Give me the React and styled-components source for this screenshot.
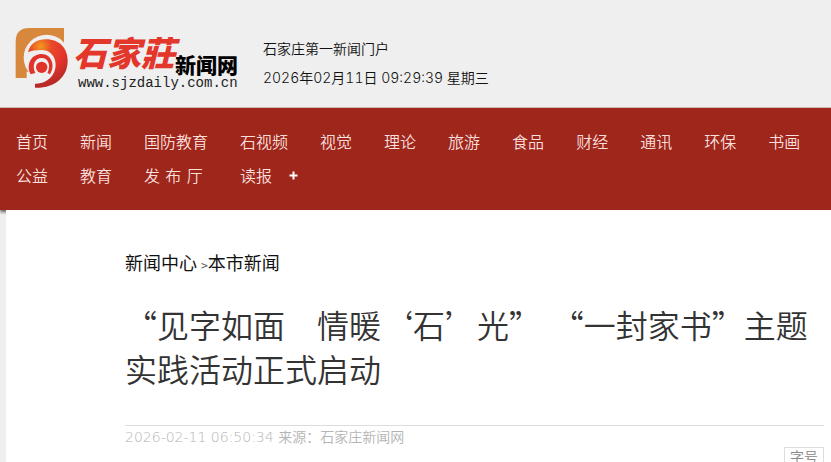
import React from 'react';
import styled, { createGlobalStyle } from 'styled-components'

const GlobalStyle = createGlobalStyle`
    * {
        box-sizing: border-box;
    }
    html {
        scrollbar-width: none;
    }
    body {
        margin: 0;
        background: #efefef;
        color: #222;
        font-family: "Noto Sans CJK SC", sans-serif;
        font-weight: 350;
    }
    a {
        color: inherit;
        text-decoration: none;
    }
`

const Header = styled.header`
    display: flex;
    align-items: center;
    gap: 24px;
    height: 108px;
    padding: 8px 15px 0;
    border-bottom: 1px solid #d6bcba;
`

const Logo = styled.a`
    display: flex;
    align-items: center;
    gap: 5px;
`

const LogoText = styled.span`
    display: flex;
    flex-direction: column;
    width: 166px;
    padding-top: 4px;
`

const LogoName = styled.span`
    display: flex;
    align-items: flex-end;
    height: 46px;
    color: #000;
    font-size: 21px;
    font-weight: 900;
    line-height: 24px;
    white-space: nowrap;
`

const Brush = styled.em`
    color: #e3372b;
    font-size: 34px;
    line-height: 48px;
`

const LogoUrl = styled.span`
    padding-left: 5px;
    color: #222;
    font-family: "Liberation Mono", monospace;
    font-size: 14px;
    font-weight: 400;
    line-height: 14px;
`

const Tagline = styled.div`
    padding-top: 11px;
    color: #111;
    font-family: Inter, "Noto Sans CJK SC", sans-serif;
    font-size: 14px;
    font-variant-numeric: tabular-nums;
    line-height: 29px;
`

const Nav = styled.nav`
    display: flex;
    flex-wrap: wrap;
    padding: 16px 0 18px;
    background: #9e261b;
    box-shadow: 0 2px 3px rgba(0, 0, 0, 0.6);
`

const NavLink = styled.a`
    padding: 0 16px;
    color: #f7dfdc;
    font-size: 16px;
    line-height: 34px;
    white-space: pre;
`

const More = styled.button`
    display: flex;
    align-items: center;
    padding: 0 1px;
    border: 0;
    background: none;
    color: #fff;
`

const Page = styled.main`
    position: relative;
    margin-left: 6px;
    padding: 38px 7px 24px 119px;
    background: #fff;
`

const Crumbs = styled.div`
    color: #111;
    font-size: 18px;
    font-weight: 400;
    line-height: 28px;
`

const Arrow = styled.span`
    color: #555;
    font-size: 12px;
`

const Title = styled.h1`
    margin: 23px 0 35px;
    color: #333;
    font-size: 32px;
    font-weight: 350;
    line-height: 44px;
`

const Meta = styled.div`
    border-top: 1px solid #ddd;
    color: #b4b4b4;
    font-family: "DejaVu Sans Light", "DejaVu Sans", "Noto Sans CJK SC", sans-serif;
    font-size: 14px;
    line-height: 20px;
    padding-top: 1px;
`

const Tools = styled.div`
    display: flex;
    justify-content: flex-end;
`

const SizeButton = styled.button`
    padding: 0 5px;
    border: 1px solid #ddd;
    background: #fff;
    color: #888;
    font-family: inherit;
    font-size: 14px;
    font-weight: 350;
    line-height: 16px;
`

const links = [
    '首页', '新闻', '国防教育', '石视频', '视觉', '理论', '旅游', '食品',
    '财经', '通讯', '环保', '书画', '公益', '教育', '发\u2004布\u2004厅\u2004', '读报',
]

const LogoMark = () => (
    <svg width="53" height="62" viewBox="45 36 159 186" aria-hidden="true">
        <defs>
            <radialGradient id="glow" gradientUnits="userSpaceOnUse" cx="122" cy="94" r="112">
                <stop offset="0" stopColor="#f39a1e" />
                <stop offset="0.3" stopColor="#e9482a" />
                <stop offset="0.7" stopColor="#e0332a" />
                <stop offset="1" stopColor="#b92a27" />
            </radialGradient>
        </defs>
        <path d="M47 189V80Q47 39 88 39H192V189Z" fill="#d8883c" />
        <circle cx="140" cy="128" r="69" fill="#efefef" />
        <path d="M80 170H204V222H80Z" fill="#efefef" />
        <path
            d="M84 112C90 86 111 73 138 73C178 73 203 99 203 137C203 186 164 220 105 218V206C142 207 167 180 167 150C167 123 149 105 125 105C107 105 94 107 84 112Z"
            fill="url(#glow)"
        />
        <path d="M92 178C76 146 96 117 125 117C153 117 168 150 150 178L142 174C154 152 145 129 125 129C104 129 95 152 106 174Z" fill="#e0332a" />
        <circle cx="125" cy="157" r="17" fill="#e0332a" />
    </svg>
)

const SiteHeader = () => (
    <Header>
        <Logo href="#">
            <LogoMark />
            <LogoText>
                <LogoName><Brush>石家莊</Brush>新闻网</LogoName>
                <LogoUrl>www.sjzdaily.com.cn</LogoUrl>
            </LogoText>
        </Logo>
        <Tagline>
            <div>石家庄第一新闻门户</div>
            <div>2026年02月11日 09:29:39 星期三</div>
        </Tagline>
    </Header>
)

const SiteNav = () => (
    <Nav>
        {links.map((name) => <NavLink href="#" key={name}>{name}</NavLink>)}
        <More aria-label="更多">
            <svg width="9" height="9" viewBox="0 0 9 9">
                <path d="M4.5 0.5V8.5M0.5 4.5H8.5" stroke="currentColor" strokeWidth="2" />
            </svg>
        </More>
    </Nav>
)

export default function App() {
    return (
        <>
            <GlobalStyle />
            <div lang="zh-CN">
                <SiteHeader />
                <SiteNav />
                <Page>
                    <Crumbs>
                        <a href="#">新闻中心</a> <Arrow>&gt;</Arrow><a href="#">本市新闻</a>
                    </Crumbs>
                    <Title>“见字如面　情暖‘石’光”{'\u2004'}“一封家书”主题实践活动正式启动</Title>
                    <Meta>2026-02-11 06:50:34 来源：石家庄新闻网</Meta>
                    <Tools>
                        <SizeButton>字号</SizeButton>
                    </Tools>
                </Page>
            </div>
        </>
    )
}
